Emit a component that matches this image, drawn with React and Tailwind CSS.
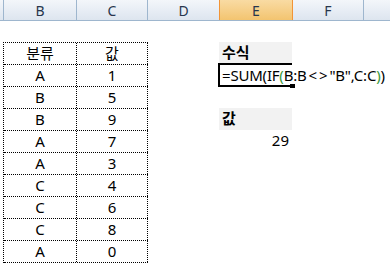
import React from "react";

const rows = [
  ["A", "1"],
  ["B", "5"],
  ["B", "9"],
  ["A", "7"],
  ["A", "3"],
  ["C", "4"],
  ["C", "6"],
  ["C", "8"],
  ["A", "0"],
];

const font = { fontFamily: '"Noto Sans", "Noto Sans CJK KR", sans-serif' };

function HeaderCell({ label, className }) {
  return (
    <div
      className={`h-full flex items-center justify-center text-[14px] text-[#27364d] ${className}`}
    >
      {label}
    </div>
  );
}

function DataRow({ a, b }) {
  return (
    <div className="flex h-[22px] border-b border-dotted border-black">
      <div className="w-[73px] border-r border-dotted border-black flex items-end justify-center pb-[3px] leading-none">
        {a}
      </div>
      <div className="w-[71px] border-r border-dotted border-black flex items-end justify-center pb-[3px] leading-none">
        {b}
      </div>
    </div>
  );
}

export default function App() {
  return (
    <div
      className="w-[390px] h-[266px] bg-white overflow-hidden text-[15px] text-black"
      style={font}
    >
      {/* column headers */}
      <div className="flex h-[21px] border-b border-[#9eb6ce] bg-gradient-to-b from-[#f3f6fa] to-[#dde5ef]">
        <HeaderCell label="" className="w-[4px] border-r border-[#9eb6ce]" />
        <HeaderCell label="B" className="w-[73px] border-r border-[#9eb6ce]" />
        <HeaderCell label="C" className="w-[71px] border-r border-[#9eb6ce]" />
        <HeaderCell label="D" className="w-[72px] border-r border-[#f29436]" />
        <HeaderCell
          label="E"
          className="w-[73px] border-r border-[#f29436] bg-gradient-to-b from-[#f9dba3] to-[#f3c46f]"
        />
        <HeaderCell label="F" className="w-[71px] border-r border-[#9eb6ce]" />
        <HeaderCell label="" className="flex-1" />
      </div>

      <div className="flex">
        {/* data table */}
        <div className="w-[219px] pl-[3px] pt-[21px]">
          <div className="w-[145px] border-l border-t border-dotted border-black">
            <DataRow a="분류" b="값" />
            {rows.map(([a, b], i) => (
              <DataRow key={i} a={a} b={b} />
            ))}
          </div>
        </div>

        {/* formula and result */}
        <div className="w-[73px] pt-[21px]">
          <div className="h-[21px] bg-[#f2f2f2] flex items-end pl-[3px] pb-[3px] leading-none font-bold">
            수식
          </div>
          <div className="relative ml-[-1px] h-[24px] border-l-2 border-t-2 border-b-2 border-black">
            <div className="absolute left-[2px] bottom-[2px] whitespace-nowrap leading-none tracking-[-0.2px]">
              =SUM(IF<span className="text-[#3a9a3a]">(</span>B:B
              <span className="mx-[2px]">&lt;</span>
              <span className="mr-[2px]">&gt;</span>"B",C:C
              <span className="text-[#3a9a3a]">)</span>)
            </div>
            <div className="absolute right-[-3px] bottom-[-3px] w-[5px] h-[4px] bg-black" />
          </div>
          <div className="h-[21px]" />
          <div className="h-[22px] bg-[#f2f2f2] flex items-end pl-[3px] pb-[4px] leading-none font-bold">
            값
          </div>
          <div className="h-[22px] flex items-end justify-end pr-[3px] pb-[4px] leading-none">
            29
          </div>
        </div>
      </div>
    </div>
  );
}
